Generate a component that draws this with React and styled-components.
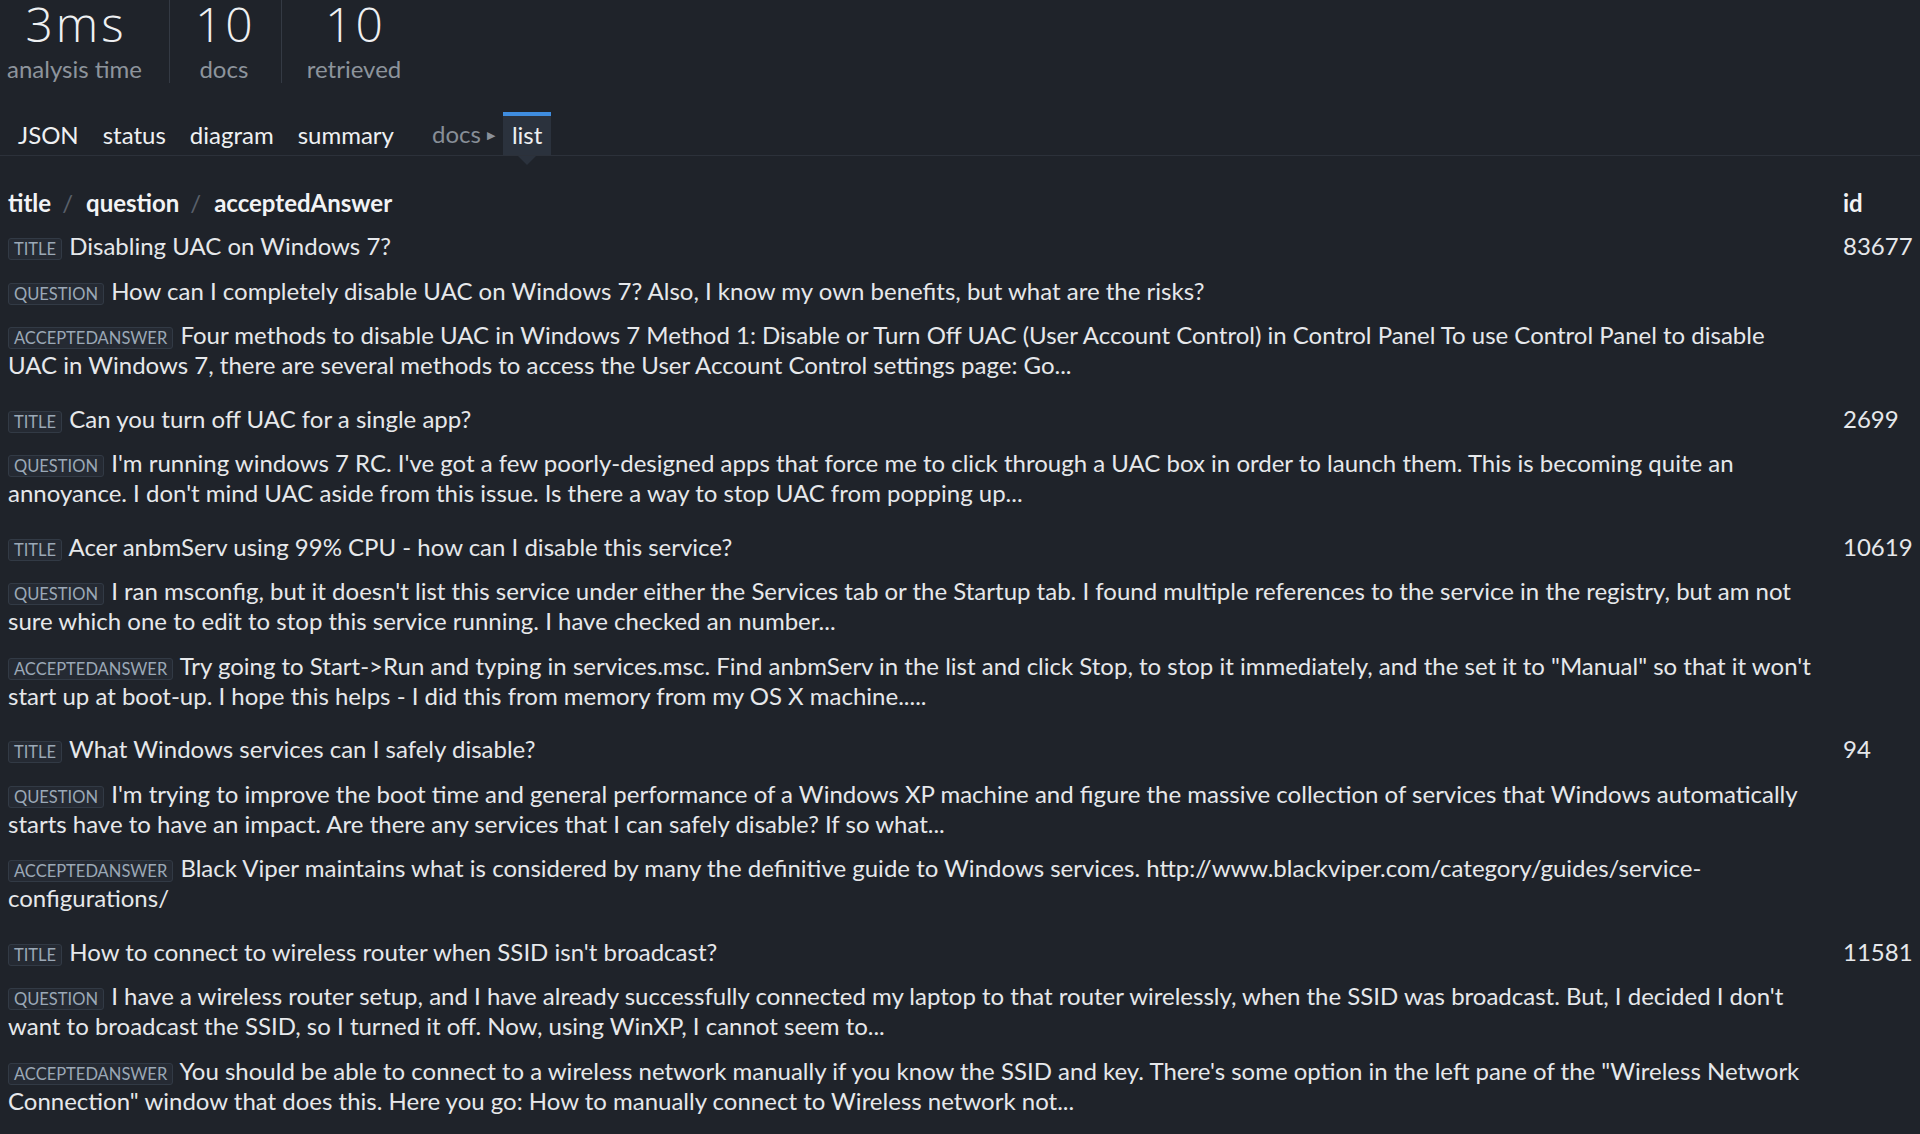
import React from "react";
import styled, { createGlobalStyle } from "styled-components";

const GlobalStyle = createGlobalStyle`
  html, body {
    margin: 0;
    padding: 0;
    background: #1f232a;
  }

  body {
    font-family: Lato, "Open Sans", "Liberation Sans", sans-serif;
    color: #e6e8eb;
  }
`;

const Page = styled.div`
  min-height: 100vh;
  background: #1f232a;
`;

const StatsBar = styled.div`
  display: flex;
`;

const Stat = styled.div`
  display: flex;
  flex-direction: column;
  align-items: center;
  padding: 0 28px 0 25px;
  border-right: 1px solid #343a44;

  &:first-child {
    padding-left: 7px;
    padding-right: 27px;
  }

  &:last-child {
    border-right: none;
  }
`;

const StatValue = styled.div`
  margin-right: -3px;
  font-family: "Open Sans", Lato, sans-serif;
  font-size: 48px;
  font-weight: 300;
  line-height: 48px;
  letter-spacing: 3px;
  color: #eef0f2;
`;

const StatLabel = styled.div`
  margin-top: 7px;
  font-size: 24px;
  line-height: 28px;
  color: #8d949c;
`;

const TabBar = styled.nav`
  display: flex;
  align-items: flex-end;
  margin-top: 29px;
  padding-left: 6px;
  border-bottom: 1px solid #2c313a;
`;

const Tab = styled.div`
  position: relative;
  padding: 0 ${(p) => (p.$active ? "9px" : "12px")} 2px;
  border-top: 4px solid ${(p) => (p.$active ? "#3f8de0" : "transparent")};
  background: ${(p) => (p.$active ? "#2b323d" : "transparent")};
  font-size: 24px;
  line-height: 37px;
  color: #eef0f2;
  cursor: pointer;

  ${(p) =>
    p.$active &&
    `
    &::after {
      content: "";
      position: absolute;
      left: 50%;
      bottom: -10px;
      margin-left: -9px;
      border-left: 9px solid transparent;
      border-right: 9px solid transparent;
      border-top: 9px solid #2b323d;
    }
  `}
`;

const Crumb = styled.div`
  display: flex;
  align-items: center;
  margin-left: 26px;
  padding-bottom: 2px;
  font-size: 24px;
  line-height: 37px;
  color: #878e97;
`;

const CrumbArrow = styled.span`
  margin: 2px 8px 0 6px;
  font-size: 11px;
  color: #8a919a;
`;

const Results = styled.div`
  padding: 26px 0 0 8px;
`;

const Row = styled.div`
  display: grid;
  grid-template-columns: 1fr 77px;
  column-gap: 30px;
  padding-bottom: ${(p) => (p.$header ? "0" : "9px")};
`;

const HeaderCell = styled.div`
  padding: 6px 0;
  font-size: 24px;
  font-weight: 700;
  line-height: 30px;
  color: #f2f3f5;
`;

const Slash = styled.span`
  padding: 0 13px 0 11px;
  font-weight: 400;
  color: #59606a;
`;

const Fields = styled.div`
  display: flex;
  flex-direction: column;
`;

const Field = styled.div`
  padding: 7px 0 7.5px;
  font-size: 24px;
  line-height: 30px;
  color: #e6e8eb;
`;

const Badge = styled.span`
  display: inline-block;
  margin-right: 1px;
  padding: 0 5px;
  border: 1px solid #323a45;
  border-radius: 3px;
  background: #252a33;
  font-size: 16.5px;
  line-height: 20px;
  text-transform: uppercase;
  color: #9ba8b6;
`;

const IdCell = styled.div`
  padding: 7px 0;
  font-size: 24px;
  line-height: 30px;
  color: #e6e8eb;
`;

const docs = [
  {
    id: 83677,
    title: "Disabling UAC on Windows 7?",
    question:
      "How can I completely disable UAC on Windows 7? Also, I know my own benefits, but what are the risks?",
    acceptedAnswer:
      "Four methods to disable UAC in Windows 7 Method 1: Disable or Turn Off UAC (User Account Control) in Control Panel To use Control Panel to disable UAC in Windows 7, there are several methods to access the User Account Control settings page: Go...",
  },
  {
    id: 2699,
    title: "Can you turn off UAC for a single app?",
    question:
      "I'm running windows 7 RC. I've got a few poorly-designed apps that force me to click through a UAC box in order to launch them. This is becoming quite an annoyance. I don't mind UAC aside from this issue. Is there a way to stop UAC from popping up...",
  },
  {
    id: 10619,
    title: "Acer anbmServ using 99% CPU - how can I disable this service?",
    question:
      "I ran msconfig, but it doesn't list this service under either the Services tab or the Startup tab. I found multiple references to the service in the registry, but am not sure which one to edit to stop this service running. I have checked an number...",
    acceptedAnswer:
      'Try going to Start->Run and typing in services.msc. Find anbmServ in the list and click Stop, to stop it immediately, and the set it to "Manual" so that it won\'t start up at boot-up. I hope this helps - I did this from memory from my OS X machine.....',
  },
  {
    id: 94,
    title: "What Windows services can I safely disable?",
    question:
      "I'm trying to improve the boot time and general performance of a Windows XP machine and figure the massive collection of services that Windows automatically starts have to have an impact. Are there any services that I can safely disable? If so what...",
    acceptedAnswer:
      "Black Viper maintains what is considered by many the definitive guide to Windows services. http://www.blackviper.com/category/guides/service-configurations/",
  },
  {
    id: 11581,
    title: "How to connect to wireless router when SSID isn't broadcast?",
    question:
      "I have a wireless router setup, and I have already successfully connected my laptop to that router wirelessly, when the SSID was broadcast. But, I decided I don't want to broadcast the SSID, so I turned it off. Now, using WinXP, I cannot seem to...",
    acceptedAnswer:
      'You should be able to connect to a wireless network manually if you know the SSID and key. There\'s some option in the left pane of the "Wireless Network Connection" window that does this. Here you go: How to manually connect to Wireless network not...',
  },
];

const fieldNames = ["title", "question", "acceptedAnswer"];

const App = () => {
  return (
    <Page>
      <GlobalStyle />

      <StatsBar>
        <Stat>
          <StatValue>3ms</StatValue>
          <StatLabel>analysis time</StatLabel>
        </Stat>
        <Stat>
          <StatValue>10</StatValue>
          <StatLabel>docs</StatLabel>
        </Stat>
        <Stat>
          <StatValue>10</StatValue>
          <StatLabel>retrieved</StatLabel>
        </Stat>
      </StatsBar>

      <TabBar>
        <Tab>JSON</Tab>
        <Tab>status</Tab>
        <Tab>diagram</Tab>
        <Tab>summary</Tab>
        <Crumb>
          docs
          <CrumbArrow>▶</CrumbArrow>
        </Crumb>
        <Tab $active>list</Tab>
      </TabBar>

      <Results>
        <Row $header>
          <HeaderCell>
            title<Slash>/</Slash>question<Slash>/</Slash>acceptedAnswer
          </HeaderCell>
          <HeaderCell>id</HeaderCell>
        </Row>

        {docs.map((doc) => (
          <Row key={doc.id}>
            <Fields>
              {fieldNames
                .filter((name) => doc[name])
                .map((name) => (
                  <Field key={name}>
                    <Badge>{name}</Badge> {doc[name]}
                  </Field>
                ))}
            </Fields>
            <IdCell>{doc.id}</IdCell>
          </Row>
        ))}
      </Results>
    </Page>
  );
};

export default App;
